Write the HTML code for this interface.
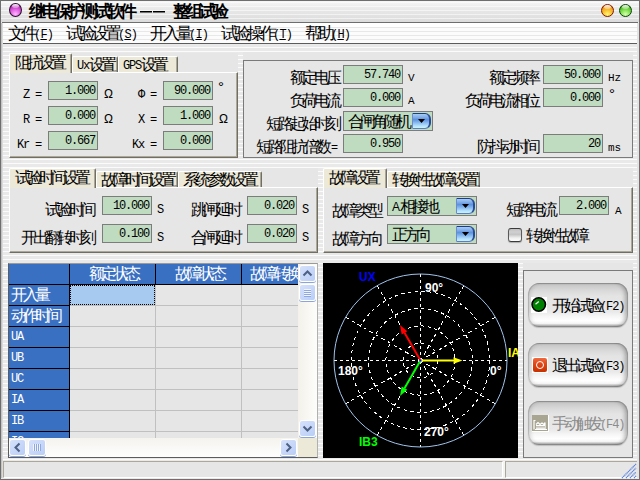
<!DOCTYPE html>
<html><head><meta charset="utf-8">
<style>
*{margin:0;padding:0;box-sizing:border-box}
html,body{width:640px;height:480px;overflow:hidden}
body{position:relative;font-family:"Liberation Sans",sans-serif;font-size:12px;color:#000;
background:repeating-linear-gradient(to bottom,#e9e9e9 0,#e9e9e9 3px,#fbfbfb 3px,#fbfbfb 4px);}
.a{position:absolute}
.t{position:absolute;white-space:nowrap;line-height:12px;font-size:12px}
.gray{position:absolute;background:#e6e6e6}
.inp{position:absolute;background:#c0dcc0;border:1px solid #7c7c7c;height:19px}
.inp span{position:absolute;right:2px;top:3px;font-family:"Liberation Mono",monospace;font-size:12px;letter-spacing:-1.2px;line-height:12px}
.tab{position:absolute;background:#ece9d8;border-top:1px solid #fff;border-left:1px solid #fff;border-right:1px solid #716f64;box-shadow:inset -1px 0 0 #aca899;border-top-left-radius:2px;border-top-right-radius:2px}
.tab>span{position:absolute;left:5px;top:2px;white-space:nowrap;line-height:13px}
.pan{position:absolute;background:#e6e6e6;border-top:1px solid #fff;border-left:1px solid #fff;border-right:1px solid #716f64;border-bottom:1px solid #716f64;box-shadow:inset -1px -1px 0 #aca899}
.gb{position:absolute;border:1px solid #7a7a7a}
.mono{font-family:"Liberation Mono",monospace}
.r{text-align:right}
i{font-style:normal;display:inline-block;width:12px;font-size:16px;line-height:12px;position:relative;top:1px}
.w13 i{width:13px;font-size:17px}
</style></head><body>
<!-- window border -->
<div class="a" style="left:0;top:0;width:640px;height:480px;border:1px solid #6e6e6e"></div>
<div class="a" style="left:1px;top:23px;width:2px;height:455px;background:linear-gradient(to right,#b8b8b8,#e6e6e6)"></div><div class="a" style="left:637px;top:23px;width:2px;height:455px;background:#e4e4e4"></div>
<!-- title bar -->
<div class="a" style="left:1px;top:1px;width:638px;height:21px;background:repeating-linear-gradient(to bottom,transparent 0,transparent 1px,rgba(255,255,255,0.55) 1px,rgba(255,255,255,0.55) 2px,transparent 2px,transparent 4px),linear-gradient(#f6f6f6,#e8e8e8 40%,#dcdcdc)"></div>
<div class="a" style="left:2px;top:22px;width:636px;height:1px;background:#6e6e6e"></div>
<div class="a" style="left:9px;top:3px;width:13px;height:14px;border-radius:50%;border:1px solid #2a102a;background:radial-gradient(circle at 50% 85%,#ffb8ff 0,#e870e8 35%,#c030c0 70%,#801880 100%)"></div><div class="a" style="left:12px;top:4px;width:7px;height:4px;border-radius:50%;background:linear-gradient(rgba(255,255,255,0.95),rgba(255,255,255,0.3))"></div>
<div class="t w13" style="left:29px;top:5px;font-weight:bold;font-size:13px;line-height:13px"><i>继</i><i>电</i><i>保</i><i>护</i><i>测</i><i>试</i><i>软</i><i>件</i></div><div class="a" style="left:140px;top:11px;width:12px;height:1px;background:#000;box-shadow:0 0.5px 0 #000"></div><div class="a" style="left:153px;top:11px;width:12px;height:1px;background:#000;box-shadow:0 0.5px 0 #000"></div><div class="t w13" style="left:173px;top:5px;font-weight:bold;font-size:13px;line-height:13px"><i>整</i><i>组</i><i>试</i><i>验</i></div>
<div class="a" style="left:601px;top:4px;width:13px;height:13px;border-radius:50%;border:1px solid #801800;background:radial-gradient(circle at 50% 85%,#fff878 0,#f8c838 35%,#f09a1a 70%,#c05008 100%)"></div><div class="a" style="left:604px;top:5px;width:7px;height:4px;border-radius:50%;background:linear-gradient(rgba(255,255,255,0.95),rgba(255,255,255,0.3))"></div>
<div class="a" style="left:619px;top:4px;width:13px;height:13px;border-radius:50%;border:1px solid #0a400a;background:radial-gradient(circle at 50% 85%,#d8ffb0 0,#90e860 35%,#50c020 70%,#208008 100%)"></div><div class="a" style="left:622px;top:5px;width:7px;height:4px;border-radius:50%;background:linear-gradient(rgba(255,255,255,0.95),rgba(255,255,255,0.3))"></div>
<!-- menu -->
<div class="a" style="left:3px;top:23px;width:634px;height:20px;background:linear-gradient(#ffffff,#ffffff 4px,transparent 4px),repeating-linear-gradient(to bottom,#e8e8e8 0,#e8e8e8 1px,#fcfcfc 1px,#fcfcfc 4px)"></div>

<div class="t w13" style="left:8px;top:27px;font-size:13px;line-height:13px"><i>文</i><i>件</i><span class="mono" style="font-size:12px;letter-spacing:-0.8px">(<u>F</u>)</span></div>
<div class="t w13" style="left:66px;top:27px;font-size:13px;line-height:13px"><i>试</i><i>验</i><i>设</i><i>置</i><span class="mono" style="font-size:12px;letter-spacing:-0.8px">(<u>S</u>)</span></div>
<div class="t w13" style="left:150px;top:27px;font-size:13px;line-height:13px"><i>开</i><i>入</i><i>量</i><span class="mono" style="font-size:12px;letter-spacing:-0.8px">(<u>I</u>)</span></div>
<div class="t w13" style="left:221px;top:27px;font-size:13px;line-height:13px"><i>试</i><i>验</i><i>操</i><i>作</i><span class="mono" style="font-size:12px;letter-spacing:-0.8px">(<u>T</u>)</span></div>
<div class="t w13" style="left:305px;top:27px;font-size:13px;line-height:13px"><i>帮</i><i>助</i><span class="mono" style="font-size:12px;letter-spacing:-0.8px">(<u>H</u>)</span></div>
<div class="a" style="left:3px;top:43px;width:634px;height:1px;background:#5c5c5c"></div>

<!-- ===== panel 1: impedance tabs ===== -->
<div class="gray" style="left:9px;top:53px;width:229px;height:20px"></div>
<div class="pan" style="left:9px;top:72px;width:229px;height:86px"></div>
<div class="tab" style="left:72px;top:56px;width:46px;height:16px"><span style="left:4px;top:1px"><span class="mono" style="letter-spacing:-1.2px">Ux</span><i>设</i><i>置</i></span></div>
<div class="tab" style="left:118px;top:56px;width:60px;height:16px"><span style="left:4px;top:1px"><span class="mono" style="letter-spacing:-1.2px">GPS</span><i>设</i><i>置</i></span></div>
<div class="tab" style="left:9px;top:53px;width:63px;height:20px;border-bottom:0"><span><i>阻</i><i>抗</i><i>设</i><i>置</i></span></div>

<div class="t r" style="left:10px;top:88px;width:31px"><span class="mono" style="font-size:12px;letter-spacing:-1.2px">Z&nbsp;=</span></div>
<div class="t r" style="left:10px;top:113px;width:31px"><span class="mono" style="font-size:12px;letter-spacing:-1.2px">R&nbsp;=</span></div>
<div class="t r" style="left:10px;top:138px;width:31px"><span class="mono" style="font-size:12px;letter-spacing:-1.2px">Kr&nbsp;=</span></div>
<div class="inp" style="left:48px;top:81px;width:50px"><span>1.000</span></div>
<div class="inp" style="left:48px;top:106px;width:50px"><span>0.000</span></div>
<div class="inp" style="left:48px;top:131px;width:50px"><span>0.667</span></div>
<div class="t" style="left:104px;top:88px">Ω</div>
<div class="t" style="left:104px;top:113px">Ω</div>
<div class="t r" style="left:120px;top:88px;width:36px"><span class="mono" style="font-size:12px;letter-spacing:-1.2px">Φ&nbsp;=</span></div>
<div class="t r" style="left:120px;top:113px;width:36px"><span class="mono" style="font-size:12px;letter-spacing:-1.2px">X&nbsp;=</span></div>
<div class="t r" style="left:120px;top:138px;width:36px"><span class="mono" style="font-size:12px;letter-spacing:-1.2px">Kx&nbsp;=</span></div>
<div class="inp" style="left:163px;top:81px;width:50px"><span>90.000</span></div>
<div class="inp" style="left:163px;top:106px;width:50px"><span>1.000</span></div>
<div class="inp" style="left:163px;top:131px;width:50px"><span>0.000</span></div>
<div class="t" style="left:218px;top:81px;font-size:15px">°</div>
<div class="t" style="left:219px;top:113px">Ω</div>

<!-- ===== panel 2: group box ===== -->
<div class="gray" style="left:243px;top:52px;width:390px;height:106px"></div>
<div class="gb" style="left:243px;top:60px;width:390px;height:98px"></div>
<div class="t r" style="left:240px;top:71px;width:98px"><i>额</i><i>定</i><i>电</i><i>压</i></div>
<div class="t r" style="left:240px;top:94px;width:98px"><i>负</i><i>荷</i><i>电</i><i>流</i></div>
<div class="t r" style="left:240px;top:117px;width:98px"><i>短</i><i>路</i><i>起</i><i>始</i><i>时</i><i>刻</i></div>
<div class="t r" style="left:240px;top:140px;width:98px"><i>短</i><i>路</i><i>阻</i><i>抗</i><i>倍</i><i>数</i> =</div>
<div class="inp" style="left:343px;top:65px;width:60px"><span>57.740</span></div>
<div class="inp" style="left:343px;top:88px;width:60px"><span>0.000</span></div>
<div class="inp" style="left:343px;top:111px;width:90px;height:20px"><span style="left:4px;right:auto;font-family:'Liberation Sans',sans-serif;letter-spacing:0;font-size:12px;top:3px"><i>合</i><i>闸</i><i>角</i><i>随</i><i>机</i></span></div>
<div class="a" style="left:412px;top:113px;width:19px;height:16px;border-radius:1px 6px 6px 1px;background:linear-gradient(#a8ccf6 0,#7eaae8 25%,#5e92dc 40%,#84b6ee 60%,#b4e2fc 85%,#ccf2ff 100%);border:1px solid #3a5ca8;border-top-color:#1e3c80;border-left-color:#6a8cc8;border-bottom-color:#5a7cc0;border-right:2px solid #2a4a98"></div><svg class="a" style="left:412px;top:113px" width="19" height="16"><polygon points="6,6 13,6 9.5,10" fill="#000"/></svg>
<div class="inp" style="left:343px;top:134px;width:60px"><span>0.950</span></div>
<div class="t mono" style="left:408px;top:72px;font-size:11px">V</div>
<div class="t mono" style="left:408px;top:95px;font-size:11px">A</div>
<div class="t r" style="left:440px;top:71px;width:97px"><i>额</i><i>定</i><i>频</i><i>率</i></div>
<div class="t r" style="left:440px;top:94px;width:97px"><i>负</i><i>荷</i><i>电</i><i>流</i><i>相</i><i>位</i></div>
<div class="t r" style="left:440px;top:140px;width:97px"><i>防</i><i>抖</i><i>动</i><i>时</i><i>间</i></div>
<div class="inp" style="left:543px;top:65px;width:60px"><span>50.000</span></div>
<div class="inp" style="left:543px;top:88px;width:60px"><span>0.000</span></div>
<div class="inp" style="left:543px;top:134px;width:60px"><span>20</span></div>
<div class="t mono" style="left:608px;top:72px;font-size:11px">Hz</div>
<div class="t" style="left:609px;top:88px;font-size:15px">°</div>
<div class="t mono" style="left:608px;top:142px;font-size:11px">ms</div>

<!-- ===== panel 3: time tabs ===== -->
<div class="gray" style="left:9px;top:168px;width:309px;height:20px"></div>
<div class="pan" style="left:9px;top:187px;width:309px;height:66px"></div>
<div class="tab" style="left:96px;top:171px;width:82px;height:16px"><span style="left:4px;top:1px"><i>故</i><i>障</i><i>时</i><i>间</i><i>设</i><i>置</i></span></div>
<div class="tab" style="left:178px;top:171px;width:84px;height:16px"><span style="left:4px;top:1px"><i>系</i><i>统</i><i>参</i><i>数</i><i>设</i><i>置</i></span></div>
<div class="tab" style="left:9px;top:168px;width:87px;height:20px;border-bottom:0"><span><i>试</i><i>验</i><i>时</i><i>间</i><i>设</i><i>置</i></span></div>
<div class="t r" style="left:10px;top:203px;width:83px"><i>试</i><i>验</i><i>时</i><i>间</i></div>
<div class="t r" style="left:10px;top:231px;width:83px"><i>开</i><i>出</i><i>翻</i><i>转</i><i>时</i><i>刻</i></div>
<div class="inp" style="left:102px;top:196px;width:50px"><span>10.000</span></div>
<div class="inp" style="left:102px;top:224px;width:50px"><span>0.100</span></div>
<div class="t mono" style="left:157px;top:204px">S</div>
<div class="t mono" style="left:157px;top:232px">S</div>
<div class="t r" style="left:160px;top:203px;width:79px"><i>跳</i><i>闸</i><i>延</i><i>时</i></div>
<div class="t r" style="left:160px;top:231px;width:79px"><i>合</i><i>闸</i><i>延</i><i>时</i></div>
<div class="inp" style="left:247px;top:196px;width:50px"><span>0.020</span></div>
<div class="inp" style="left:247px;top:224px;width:50px"><span>0.020</span></div>
<div class="t mono" style="left:302px;top:204px">S</div>
<div class="t mono" style="left:302px;top:232px">S</div>

<!-- ===== panel 4: fault tabs ===== -->
<div class="gray" style="left:323px;top:168px;width:310px;height:20px"></div>
<div class="pan" style="left:323px;top:187px;width:310px;height:66px"></div>
<div class="tab" style="left:387px;top:171px;width:93px;height:16px"><span style="left:4px;top:1px"><i>转</i><i>换</i><i>性</i><i>故</i><i>障</i><i>设</i><i>置</i></span></div>
<div class="tab" style="left:323px;top:168px;width:64px;height:20px;border-bottom:0"><span><i>故</i><i>障</i><i>设</i><i>置</i></span></div>
<div class="t" style="left:332px;top:204px"><i>故</i><i>障</i><i>类</i><i>型</i></div>
<div class="t" style="left:332px;top:232px"><i>故</i><i>障</i><i>方</i><i>向</i></div>
<div class="inp" style="left:387px;top:196px;width:90px;height:20px"><span style="left:4px;right:auto;font-family:'Liberation Sans',sans-serif;letter-spacing:0;font-size:12px;top:3px">A<i>相</i><i>接</i><i>地</i></span></div>
<div class="a" style="left:456px;top:198px;width:19px;height:16px;border-radius:1px 6px 6px 1px;background:linear-gradient(#a8ccf6 0,#7eaae8 25%,#5e92dc 40%,#84b6ee 60%,#b4e2fc 85%,#ccf2ff 100%);border:1px solid #3a5ca8;border-top-color:#1e3c80;border-left-color:#6a8cc8;border-bottom-color:#5a7cc0;border-right:2px solid #2a4a98"></div><svg class="a" style="left:456px;top:198px" width="19" height="16"><polygon points="6,6 13,6 9.5,10" fill="#000"/></svg>
<div class="inp" style="left:387px;top:224px;width:90px;height:20px"><span style="left:4px;right:auto;font-family:'Liberation Sans',sans-serif;letter-spacing:0;font-size:12px;top:3px"><i>正</i><i>方</i><i>向</i></span></div>
<div class="a" style="left:456px;top:226px;width:19px;height:16px;border-radius:1px 6px 6px 1px;background:linear-gradient(#a8ccf6 0,#7eaae8 25%,#5e92dc 40%,#84b6ee 60%,#b4e2fc 85%,#ccf2ff 100%);border:1px solid #3a5ca8;border-top-color:#1e3c80;border-left-color:#6a8cc8;border-bottom-color:#5a7cc0;border-right:2px solid #2a4a98"></div><svg class="a" style="left:456px;top:226px" width="19" height="16"><polygon points="6,6 13,6 9.5,10" fill="#000"/></svg>
<div class="t" style="left:506px;top:203px"><i>短</i><i>路</i><i>电</i><i>流</i></div>
<div class="inp" style="left:559px;top:196px;width:50px"><span>2.000</span></div>
<div class="t mono" style="left:615px;top:205px;font-size:11px">A</div>
<div class="a" style="left:508px;top:228px;width:14px;height:14px;border:1px solid #5a5a5a;border-top-color:#3a3a3a;border-bottom-color:#3a3a3a;border-radius:3px;background:linear-gradient(#c0c0c0,#d0d0d0 25%,#c4c4c4 45%,#f0f0f0 75%,#fdfdfd 100%);box-shadow:0 1px 1px rgba(0,0,0,0.25)"></div>
<div class="t" style="left:526px;top:229px"><i>转</i><i>换</i><i>性</i><i>故</i><i>障</i></div>

<!-- ===== grid ===== -->
<div class="a" style="left:8px;top:263px;width:310px;height:195px;background:#e6e6e6;border-left:1px solid #5c5c5c;border-bottom:1px solid #5c5c5c;border-top:1px solid #9a9a9a;border-right:1px solid #b0b0b0"></div>
<div class="a" style="left:9px;top:264px;width:289px;height:20px;background:#3a70c2"></div>
<div class="a" style="left:9px;top:284px;width:60px;height:154px;background:#3a70c2"></div>
<div class="a" style="left:70px;top:285px;width:85px;height:20px;background:#a6caf0;outline:1px dotted #000;outline-offset:-1px"></div>
<div class="a" style="left:9px;top:284px;width:289px;height:1px;background:#000"></div>
<div class="a" style="left:9px;top:305px;width:60px;height:1px;background:#000"></div>
<div class="a" style="left:70px;top:305px;width:228px;height:1px;background:#c0c0c0"></div>
<div class="a" style="left:9px;top:326px;width:60px;height:1px;background:#000"></div>
<div class="a" style="left:70px;top:326px;width:228px;height:1px;background:#c0c0c0"></div>
<div class="a" style="left:9px;top:347px;width:60px;height:1px;background:#000"></div>
<div class="a" style="left:70px;top:347px;width:228px;height:1px;background:#c0c0c0"></div>
<div class="a" style="left:9px;top:368px;width:60px;height:1px;background:#000"></div>
<div class="a" style="left:70px;top:368px;width:228px;height:1px;background:#c0c0c0"></div>
<div class="a" style="left:9px;top:389px;width:60px;height:1px;background:#000"></div>
<div class="a" style="left:70px;top:389px;width:228px;height:1px;background:#c0c0c0"></div>
<div class="a" style="left:9px;top:410px;width:60px;height:1px;background:#000"></div>
<div class="a" style="left:70px;top:410px;width:228px;height:1px;background:#c0c0c0"></div>
<div class="a" style="left:9px;top:431px;width:60px;height:1px;background:#000"></div>
<div class="a" style="left:70px;top:431px;width:228px;height:1px;background:#c0c0c0"></div>
<div class="a" style="left:69px;top:264px;width:1px;height:174px;background:#000"></div>
<div class="a" style="left:155px;top:264px;width:1px;height:20px;background:#000"></div>
<div class="a" style="left:155px;top:285px;width:1px;height:153px;background:#c0c0c0"></div>
<div class="a" style="left:241px;top:264px;width:1px;height:20px;background:#000"></div>
<div class="a" style="left:241px;top:285px;width:1px;height:153px;background:#c0c0c0"></div>
<div class="t" style="left:70px;top:267px;width:85px;text-align:center;color:#fff"><i>额</i><i>定</i><i>状</i><i>态</i></div>
<div class="t" style="left:156px;top:267px;width:85px;text-align:center;color:#fff"><i>故</i><i>障</i><i>状</i><i>态</i></div>
<div class="t" style="left:250px;top:267px;color:#fff"><i>故</i><i>障</i><i>转</i><i>换</i></div>
<div class="t" style="left:11px;top:288px;color:#fff"><i>开</i><i>入</i><i>量</i></div>
<div class="t" style="left:11px;top:309px;color:#fff"><i>动</i><i>作</i><i>时</i><i>间</i></div>
<div class="t mono" style="left:11px;top:331px;color:#fff;letter-spacing:-1.2px">UA</div>
<div class="t mono" style="left:11px;top:352px;color:#fff;letter-spacing:-1.2px">UB</div>
<div class="t mono" style="left:11px;top:373px;color:#fff;letter-spacing:-1.2px">UC</div>
<div class="t mono" style="left:11px;top:394px;color:#fff;letter-spacing:-1.2px">IA</div>
<div class="t mono" style="left:11px;top:415px;color:#fff;letter-spacing:-1.2px">IB</div>
<div class="t mono" style="left:11px;top:436px;color:#fff;letter-spacing:-1.2px">IC</div>
<div class="a" style="left:9px;top:438px;width:308px;height:19px;background:linear-gradient(#f4f3ee,#fefefe)"></div>
<div class="a" style="left:298px;top:264px;width:19px;height:174px;background:linear-gradient(to right,#f3f1ea,#fdfdfb)"></div>
<div class="a" style="left:299px;top:265px;width:17px;height:17px;background:linear-gradient(135deg,#d6e2fb,#b9cdf6);border:1px solid #fff;border-radius:3px;box-shadow:0 1px 0 #8aa5dc"></div>
<svg class="a" style="left:299px;top:265px" width="17" height="17"><path d="M4.5 10.5 L8.5 6.5 L12.5 10.5" fill="none" stroke="#4d6185" stroke-width="2"/></svg>
<div class="a" style="left:299px;top:284px;width:17px;height:17px;background:linear-gradient(135deg,#d6e2fb,#b9cdf6);border:1px solid #fff;border-radius:3px;box-shadow:0 1px 0 #8aa5dc"></div>
<svg class="a" style="left:299px;top:284px" width="17" height="17"><path d="M5 5.5h7M5 7.5h7M5 9.5h7M5 11.5h7" stroke="#f0f4ff" stroke-width="1"/><path d="M5 6.5h7M5 8.5h7M5 10.5h7M5 12.5h7" stroke="#8fa8e0" stroke-width="1"/></svg>
<div class="a" style="left:299px;top:420px;width:17px;height:17px;background:linear-gradient(135deg,#d6e2fb,#b9cdf6);border:1px solid #fff;border-radius:3px;box-shadow:0 1px 0 #8aa5dc"></div>
<svg class="a" style="left:299px;top:420px" width="17" height="17"><path d="M4.5 6.5 L8.5 10.5 L12.5 6.5" fill="none" stroke="#4d6185" stroke-width="2"/></svg>
<div class="a" style="left:9px;top:439px;width:17px;height:17px;background:linear-gradient(135deg,#d6e2fb,#b9cdf6);border:1px solid #fff;border-radius:3px;box-shadow:0 1px 0 #8aa5dc"></div>
<svg class="a" style="left:9px;top:439px" width="17" height="17"><path d="M10.5 4.5 L6.5 8.5 L10.5 12.5" fill="none" stroke="#4d6185" stroke-width="2"/></svg>
<div class="a" style="left:28px;top:439px;width:18px;height:17px;background:linear-gradient(135deg,#d6e2fb,#b9cdf6);border:1px solid #fff;border-radius:3px;box-shadow:0 1px 0 #8aa5dc"></div>
<svg class="a" style="left:28px;top:439px" width="18" height="17"><path d="M5.5 5v7M7.5 5v7M9.5 5v7M11.5 5v7" stroke="#f0f4ff" stroke-width="1"/><path d="M6.5 5v7M8.5 5v7M10.5 5v7M12.5 5v7" stroke="#8fa8e0" stroke-width="1"/></svg>
<div class="a" style="left:280px;top:439px;width:17px;height:17px;background:linear-gradient(135deg,#d6e2fb,#b9cdf6);border:1px solid #fff;border-radius:3px;box-shadow:0 1px 0 #8aa5dc"></div>
<svg class="a" style="left:280px;top:439px" width="17" height="17"><path d="M6.5 4.5 L10.5 8.5 L6.5 12.5" fill="none" stroke="#4d6185" stroke-width="2"/></svg>
<div class="a" style="left:298px;top:438px;width:19px;height:19px;background:#ece9d8"></div>

<!-- ===== chart ===== -->
<svg class="a" style="left:323px;top:263px" width="195" height="195" viewBox="0 0 195 195">
<rect width="195" height="195" fill="#000"/>
<circle cx="97.5" cy="97.5" r="17.3" stroke="#fff" stroke-width="1" fill="none" stroke-dasharray="3.4 3.4" shape-rendering="crispEdges"/>
<circle cx="97.5" cy="97.5" r="34.6" stroke="#fff" stroke-width="1" fill="none" stroke-dasharray="3.4 3.4" shape-rendering="crispEdges"/>
<circle cx="97.5" cy="97.5" r="51.9" stroke="#fff" stroke-width="1" fill="none" stroke-dasharray="3.4 3.4" shape-rendering="crispEdges"/>
<circle cx="97.5" cy="97.5" r="69.2" stroke="#fff" stroke-width="1" fill="none" stroke-dasharray="3.4 3.4" shape-rendering="crispEdges"/>
<line x1="97.5" y1="97.5" x2="184.0" y2="97.5" stroke="#fff" stroke-width="1" fill="none" stroke-dasharray="3.00 3.00" shape-rendering="crispEdges"/>
<line x1="97.5" y1="97.5" x2="172.4" y2="54.3" stroke="#fff" stroke-width="1" fill="none" stroke-dasharray="3.46 3.46" shape-rendering="crispEdges"/>
<line x1="97.5" y1="97.5" x2="140.8" y2="22.6" stroke="#fff" stroke-width="1" fill="none" stroke-dasharray="3.47 3.47" shape-rendering="crispEdges"/>
<line x1="97.5" y1="97.5" x2="97.5" y2="11.0" stroke="#fff" stroke-width="1" fill="none" stroke-dasharray="3.00 3.00" shape-rendering="crispEdges"/>
<line x1="97.5" y1="97.5" x2="54.3" y2="22.6" stroke="#fff" stroke-width="1" fill="none" stroke-dasharray="3.46 3.46" shape-rendering="crispEdges"/>
<line x1="97.5" y1="97.5" x2="22.6" y2="54.3" stroke="#fff" stroke-width="1" fill="none" stroke-dasharray="3.46 3.46" shape-rendering="crispEdges"/>
<line x1="97.5" y1="97.5" x2="11.0" y2="97.5" stroke="#fff" stroke-width="1" fill="none" stroke-dasharray="3.00 3.00" shape-rendering="crispEdges"/>
<line x1="97.5" y1="97.5" x2="22.6" y2="140.8" stroke="#fff" stroke-width="1" fill="none" stroke-dasharray="3.47 3.47" shape-rendering="crispEdges"/>
<line x1="97.5" y1="97.5" x2="54.2" y2="172.4" stroke="#fff" stroke-width="1" fill="none" stroke-dasharray="3.47 3.47" shape-rendering="crispEdges"/>
<line x1="97.5" y1="97.5" x2="97.5" y2="184.0" stroke="#fff" stroke-width="1" fill="none" stroke-dasharray="3.00 3.00" shape-rendering="crispEdges"/>
<line x1="97.5" y1="97.5" x2="140.8" y2="172.4" stroke="#fff" stroke-width="1" fill="none" stroke-dasharray="3.47 3.47" shape-rendering="crispEdges"/>
<line x1="97.5" y1="97.5" x2="172.4" y2="140.8" stroke="#fff" stroke-width="1" fill="none" stroke-dasharray="3.47 3.47" shape-rendering="crispEdges"/>
<circle cx="97.5" cy="97.5" r="86.5" stroke="#a0c4ec" stroke-width="1" fill="none"/>



<line x1="97.5" y1="97.5" x2="81.5" y2="69.8" stroke="#ff0000" stroke-width="2"/><polygon points="77.0,62.0 78.7,71.4 84.3,68.2" fill="#ff0000"/><line x1="97.5" y1="97.5" x2="81.5" y2="125.2" stroke="#00ff00" stroke-width="2"/><polygon points="77.0,133.0 84.3,126.8 78.7,123.6" fill="#00ff00"/><line x1="97.5" y1="97.5" x2="130.5" y2="97.5" stroke="#ffff00" stroke-width="2"/><polygon points="139.5,97.5 130.5,94.3 130.5,100.7" fill="#ffff00"/>
<rect x="96.5" y="96.5" width="2" height="2" fill="#0000ff"/>
<text x="102" y="29" fill="#fff" font-family="Liberation Sans" font-weight="bold" font-size="12">90°</text>
<text x="15" y="112" fill="#fff" font-family="Liberation Sans" font-weight="bold" font-size="12">180°</text>
<text x="167" y="112" fill="#fff" font-family="Liberation Sans" font-weight="bold" font-size="12">0°</text>
<text x="101" y="173" fill="#fff" font-family="Liberation Sans" font-weight="bold" font-size="12">270°</text>
<text x="36" y="18" fill="#0000ff" font-family="Liberation Sans" font-weight="bold" font-size="12">UX</text>
<text x="185" y="94" fill="#ffff00" font-family="Liberation Sans" font-weight="bold" font-size="12">IA</text>
<text x="36" y="183" fill="#00ff00" font-family="Liberation Sans" font-weight="bold" font-size="12">IB3</text>
</svg>

<!-- ===== buttons panel ===== -->
<div class="gray" style="left:523px;top:263px;width:110px;height:195px"></div>
<div class="gb" style="left:523px;top:270px;width:110px;height:188px"></div>
<div class="a" style="left:528px;top:283px;width:100px;height:44px;border-radius:11px/12px;background:linear-gradient(#a4a4a4 0,#c8c8c8 4%,#dadada 18%,#e4e4e4 30%,#e8e8e8 64%,#f6f6f6 76%,#ffffff 86%,#f4f4f4 92%,#c0c0c0 96%,#9a9a9a 100%);box-shadow:inset 0 0 0 1px rgba(0,0,0,0.12),inset 4px 0 4px -2px rgba(0,0,0,0.16),inset -5px 0 4px -2px rgba(0,0,0,0.28),0 1px 1px rgba(0,0,0,0.18)"></div><svg class="a" style="left:531px;top:297px" width="16" height="16"><rect width="16" height="16" fill="#fff"/><circle cx="7.75" cy="7.5" r="6.7" fill="#008000" stroke="#000" stroke-width="1.6"/><path d="M4.5 7.2 L7.8 4.4" stroke="#f4e8f4" stroke-width="1.3"/></svg><div class="t" style="left:552px;top:299px;color:#000"><i>开</i><i>始</i><i>试</i><i>验</i><span class="mono" style="letter-spacing:-1.1px">(F2)</span></div>
<div class="a" style="left:528px;top:343px;width:100px;height:44px;border-radius:11px/12px;background:linear-gradient(#a4a4a4 0,#c8c8c8 4%,#dadada 18%,#e4e4e4 30%,#e8e8e8 64%,#f6f6f6 76%,#ffffff 86%,#f4f4f4 92%,#c0c0c0 96%,#9a9a9a 100%);box-shadow:inset 0 0 0 1px rgba(0,0,0,0.12),inset 4px 0 4px -2px rgba(0,0,0,0.16),inset -5px 0 4px -2px rgba(0,0,0,0.28),0 1px 1px rgba(0,0,0,0.18)"></div><div class="a" style="left:532px;top:357px;width:16px;height:16px;background:#fff"></div><div class="a" style="left:533px;top:358px;width:14px;height:14px;border-radius:2px;background:linear-gradient(#f06a40,#e04818 40%,#c83000)"></div><div class="a" style="left:536px;top:361px;width:8px;height:8px;border-radius:50%;border:1px solid #fff"></div><div class="t" style="left:552px;top:359px;color:#000"><i>退</i><i>出</i><i>试</i><i>验</i><span class="mono" style="letter-spacing:-1.1px">(F3)</span></div>
<div class="a" style="left:528px;top:401px;width:100px;height:44px;border-radius:11px/12px;background:linear-gradient(#a4a4a4 0,#c8c8c8 4%,#dadada 18%,#e4e4e4 30%,#e8e8e8 64%,#f6f6f6 76%,#ffffff 86%,#f4f4f4 92%,#c0c0c0 96%,#9a9a9a 100%);box-shadow:inset 0 0 0 1px rgba(0,0,0,0.12),inset 4px 0 4px -2px rgba(0,0,0,0.16),inset -5px 0 4px -2px rgba(0,0,0,0.28),0 1px 1px rgba(0,0,0,0.18)"></div><svg class="a" style="left:532px;top:415px" width="18" height="18"><rect x="0" y="0" width="17" height="17" fill="#fff"/><rect x="0" y="0" width="16" height="16" fill="#a9a593"/><path d="M2 14.5V5.5h1.5M3 14.5h12M4 9.5 L6 7.5 L8 9.5 L10 8 L12 9.5 L13 7.5 V14" stroke="#fff" stroke-width="1.2" fill="none"/><path d="M4 10h9v4H4z" fill="#fff"/><path d="M4 11.5h9M4 12.8h9" stroke="#a9a593" stroke-width="0.7"/></svg><div class="t" style="left:552px;top:417px;color:#8c8c8c"><i>手</i><i>动</i><i>触</i><i>发</i><span class="mono" style="letter-spacing:-1.1px">(F4)</span></div>

<!-- ===== status bar ===== -->
<div class="a" style="left:3px;top:461px;width:634px;height:17px;background:#f4f4f4"></div>
<div class="a" style="left:3px;top:461px;width:500px;height:17px;background:#e6e6e6;border-top:1px solid #aca899;border-left:1px solid #aca899;border-bottom:1px solid #fff;border-right:1px solid #fff"></div>
<div class="a" style="left:505px;top:461px;width:132px;height:17px;background:#e6e6e6;border-top:1px solid #aca899;border-left:1px solid #aca899;border-bottom:1px solid #fff"></div>
<svg class="a" style="left:620px;top:462px" width="18" height="17">
<g stroke="#5a84dc" stroke-width="1.3" fill="none" stroke-dasharray="1.2 0.5">
<path d="M2 16 L16 2"/><path d="M6 16 L16 6"/><path d="M10 16 L16 10"/><path d="M14 16 L16 14"/>
</g></svg>
</body></html>
